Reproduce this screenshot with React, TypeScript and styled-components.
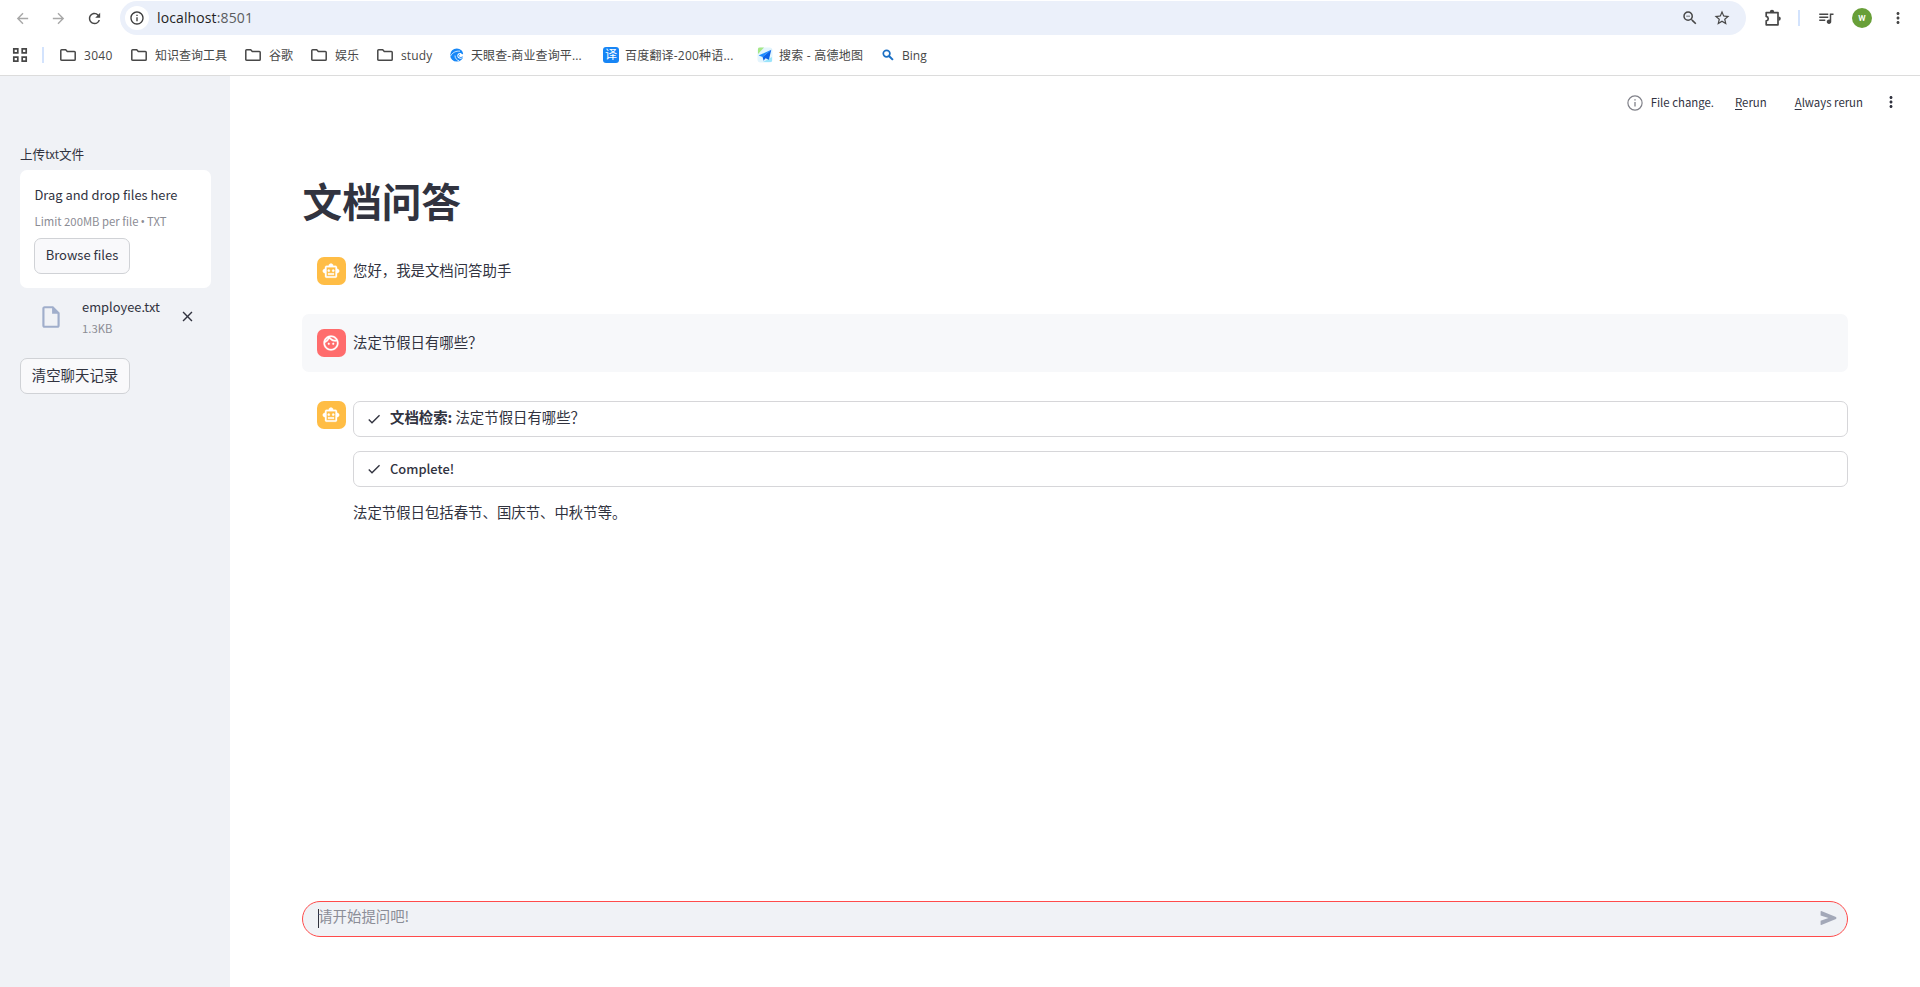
import React from 'react';
import styled, { createGlobalStyle } from 'styled-components';
import {
  MdArrowBack,
  MdArrowForward,
  MdRefresh,
  MdStarBorder,
  MdQueueMusic,
  MdMoreVert,
  MdOutlineSmartToy,
  MdOutlineFace,
  MdOutlineInsertDriveFile,
  MdClose,
  MdCheck,
  MdZoomOut,
  MdInfoOutline,
} from 'react-icons/md';

const Global = createGlobalStyle`
  * { box-sizing: border-box; }
  body { margin: 0; background: #fff; overflow: hidden; }
  button { font: inherit; color: inherit; }
  svg { display: block; flex: none; }
`;

const Page = styled.div`
  height: 987px;
  display: flex;
  flex-direction: column;
  background: #fff;
  color: #31333f;
  font-family: 'Noto Sans CJK SC', sans-serif;
`;

/* Browser chrome */
const Chrome = styled.header`
  height: 76px;
  flex: none;
  border-bottom: 1px solid #dcdcdc;
  font-family: 'Open Sans', 'Noto Sans CJK SC', sans-serif;
  color: #474747;
`;

const Toolbar = styled.div`
  display: flex;
  align-items: center;
  height: 35px;
  padding: 1px 11px 0 14px;
`;

const NavGroup = styled.div`
  display: flex;
  align-items: center;
  gap: 19px;
  width: 106px;
  flex: none;
`;

const AddressBar = styled.div`
  display: flex;
  align-items: center;
  width: 1626px;
  height: 34px;
  padding: 0 15px 0 5px;
  border-radius: 17px;
  background: #ebf0fa;
`;

const SiteInfo = styled.span`
  display: grid;
  place-items: center;
  width: 24px;
  height: 24px;
  border-radius: 50%;
  background: #fff;
  color: #3c3c3c;
`;

const Address = styled.span`
  flex: 1;
  padding-left: 8px;
  font-size: 14px;
  line-height: 20px;
  letter-spacing: 0.12px;
  color: #5a5c60;

  b { font-weight: 400; color: #1f1f1f; }
`;

const AddressActions = styled.div`
  display: flex;
  gap: 14px;
`;

const ToolbarActions = styled.div`
  display: flex;
  align-items: center;
  flex: 1;
  padding-left: 18px;
`;

const Separator = styled.span<{ $m: string }>`
  width: 2px;
  height: 16px;
  margin: ${(p) => p.$m};
  background: #d3e3fd;
`;

const Profile = styled.span`
  display: grid;
  place-items: center;
  width: 20px;
  height: 20px;
  margin: 0 17px 0 17px;
  border-radius: 50%;
  background: #689f38;
  color: #fff;
  font: 500 10px/18px Roboto, sans-serif;
`;

const Bookmarks = styled.nav`
  display: flex;
  align-items: center;
  height: 40px;
  padding-left: 12px;
`;

const Bookmark = styled.span<{ $w: number; $gap?: number; $ls?: number }>`
  display: flex;
  align-items: center;
  gap: ${(p) => p.$gap ?? 8}px;
  width: ${(p) => p.$w}px;
  font-size: 12px;
  line-height: 18px;
  letter-spacing: ${(p) => p.$ls ?? 0}px;
  white-space: nowrap;
`;

const BookmarkName = styled.span`
  padding-top: 2px;
`;

const TranslateBadge = styled.span`
  display: grid;
  place-items: center;
  width: 16px;
  height: 16px;
  border-radius: 3px;
  background: #1785f5;
  color: #fff;
  font-size: 12px;
  line-height: 14px;
`;

/* Application */
const AppBody = styled.div`
  display: flex;
  flex: 1;
  min-height: 0;
`;

const Sidebar = styled.aside`
  width: 230px;
  flex: none;
  padding: 68px 19px 0 20px;
  background: #f0f2f6;
`;

const Latin = styled.span<{ $size: number; $ls?: number }>`
  font-size: ${(p) => p.$size}px;
  letter-spacing: ${(p) => p.$ls ?? 0}px;
`;

const Label = styled.div`
  height: 26px;
  font-size: 12.6px;
  line-height: 20px;
`;

const DropZone = styled.section`
  height: 118px;
  padding: 14px;
  border-radius: 7px;
  background: #fff;
`;

const Bullet = styled.span`
  margin: 0 2px;
  font-family: 'Open Sans', sans-serif;
  font-size: 12px;
`;

const Line = styled.div<{ $h: number; $muted?: boolean }>`
  display: flex;
  align-items: center;
  height: ${(p) => p.$h}px;
  line-height: ${(p) => p.$h}px;
  padding-left: 0.5px;
  white-space: nowrap;
  color: ${(p) => (p.$muted ? '#8b8c94' : 'inherit')};
`;

const Button = styled.button<{ $w: number; $mt?: number }>`
  display: flex;
  align-items: center;
  justify-content: center;
  width: ${(p) => p.$w}px;
  height: 36px;
  margin-top: ${(p) => p.$mt ?? 0}px;
  padding: 0 0 3px;
  border: 1px solid #d0d2d6;
  border-radius: 7px;
  background: #f9f9fb;
  font-size: 14.4px;
  white-space: nowrap;
`;

const FileRow = styled.div`
  display: flex;
  align-items: center;
  height: 70px;
  padding: 0 15px 13px 18px;
`;

const FileMeta = styled.div`
  flex: 1;
  padding: 2px 0 0 17.5px;
`;

const Main = styled.main`
  display: flex;
  flex-direction: column;
  flex: 1;
  padding: 0 72px 50px;
`;

const StatusBar = styled.div`
  display: flex;
  align-items: center;
  justify-content: flex-end;
  height: 54px;
  margin-right: -52px;

  u { text-underline-offset: 2px; }
`;

const StatusItem = styled.span<{ $ml: number }>`
  margin-left: ${(p) => p.$ml}px;
  padding-bottom: 2px;
  font-size: 11.4px;
  line-height: 18px;
`;

const Title = styled.h1`
  height: 112.4px;
  margin: 0;
  padding: 45.5px 0 0 0.6px;
  font-size: 39.6px;
  line-height: 48px;
  font-weight: 700;
`;

const Messages = styled.div`
  display: flex;
  flex-direction: column;
  gap: 14.4px;
  flex: 1;
`;

const Message = styled.article<{ $user?: boolean }>`
  display: flex;
  gap: 7.2px;
  min-height: 57.6px;
  padding: 14.4px ${(p) => (p.$user ? '14.4px' : '0')} 14.4px 15px;
  border-radius: 7px;
  background: ${(p) => (p.$user ? '#f7f8fa' : 'transparent')};
`;

const Avatar = styled.span<{ $bg: string }>`
  display: grid;
  place-items: center;
  width: 28.8px;
  height: 28px;
  flex: none;
  border-radius: 7px;
  background: ${(p) => p.$bg};
  color: #fff;

  path:not([fill='none']) { stroke: #fff; stroke-width: 0.4px; }
`;

const MessageBody = styled.div`
  display: flex;
  flex-direction: column;
  gap: 14px;
  flex: 1;
`;

const Text = styled.p<{ $tight?: boolean }>`
  margin: ${(p) => (p.$tight ? '-1.5px' : '0')} 0 0;
  font-size: 14.4px;
  line-height: 26px;
`;

const Step = styled.div`
  display: flex;
  align-items: center;
  gap: 8px;
  height: 36px;
  padding: 0 12px;
  border: 1px solid #d6d6d9;
  border-radius: 7px;
  font-size: 14.4px;
  line-height: 20px;

  b { font-weight: 700; }
`;

const StepText = styled.span<{ $up?: number }>`
  padding-bottom: ${(p) => p.$up ?? 0}px;
`;

const Done = styled(Latin)`
  font-weight: 500;
`;

const ChatInput = styled.div`
  display: flex;
  align-items: center;
  height: 36px;
  padding: 0 10px 0 15px;
  border: 1px solid #ff4b4b;
  border-radius: 18px;
  background: #f0f2f6;

  svg { margin-bottom: 2px; }
`;

const Caret = styled.span`
  width: 1px;
  height: 19px;
  margin-top: -2px;
  background: #31333f;
`;

const Placeholder = styled.span`
  flex: 1;
  margin-left: -0.8px;
  padding-bottom: 6px;
  font-size: 14.4px;
  line-height: 20px;
  color: #8b8d97;
`;

const FolderIcon = () => (
  <svg width="16" height="16" viewBox="0 0 16 16" fill="none" stroke="#474747" strokeWidth="1.5">
    <path d="M.8 12.4V3.6q0-.9.9-.9h4l1.6 1.7h7q.9 0 .9.9v7.1q0 .9-.9.9H1.7q-.9 0-.9-.9Z" />
  </svg>
);

const AppsIcon = () => (
  <svg width="16" height="16" viewBox="0 0 16 16" fill="none" stroke="#474747" strokeWidth="1.7">
    <path d="M1.8 1.8h4v4h-4zM10.2 1.8h4v4h-4zM1.8 10.2h4v4h-4zM10.2 10.2h4v4h-4z" />
  </svg>
);

const PuzzleIcon = () => (
  <svg width="18" height="18" viewBox="0 0 18 18">
    <path
      d="M2.2 3.6H14v12.2H2.2v-3.9c2.7-.7 2.7-3.8 0-4.5Z"
      fill="none"
      stroke="#474747"
      strokeWidth="1.7"
      strokeLinejoin="round"
    />
    <path d="M5.8 3a2.2 2.2 0 0 1 4.4 0ZM14.6 7.4a2.2 2.2 0 0 1 0 4.4Z" fill="#474747" />
  </svg>
);

const SwirlIcon = () => (
  <svg width="16" height="16" viewBox="0 0 16 16">
    <circle cx="7.8" cy="8" r="6.6" fill="#1687f7" />
    <path d="M1.500 9C3.500 5.500 7 3.700 11 4.200" fill="none" stroke="#fff" strokeWidth=".8" />
    <path d="M15.500 6.500c-1.600 1.300-2.700.9-3.400-.2-1.500-1-4 .2-3.800 2.700.2 2.100 2.500 3.200 4.200 2.500l3-2Z" fill="#fff" />
    <path d="M10.800 7.200c-1.300.4-1.600 2.300-.3 3 .9.500 2.200.3 3.200-.4" fill="none" stroke="#1687f7" strokeWidth="1" />
    <path d="M6 8.500c0 2.800 1.600 4.500 4.200 5.400" fill="none" stroke="#fff" strokeWidth=".8" />
  </svg>
);

const MapIcon = () => (
  <svg width="16" height="16" viewBox="0 0 16 16">
    <rect x=".5" y=".5" width="15" height="15" rx="3" fill="#e4f5fd" />
    <path d="M1 1.500Q1 .5 3 .5h4L1 7Z" fill="#a5e887" />
    <path d="m6 15 9-5v3.500q0 1.500-1.500 1.500Z" fill="#9be4fb" />
    <path d="M14.300 2.700 1.600 8.600l4 1.500Z" fill="#1d8cff" />
    <path d="m14.300 2.700-8.700 7.400 1 3.700 1.900-2.500 3.400 1.500Z" fill="#0b62e8" />
  </svg>
);

const SearchIcon = () => (
  <svg width="14" height="14" viewBox="0 0 14 14" fill="none" stroke="#1a6fc4" strokeWidth="1.700">
    <circle cx="5.600" cy="5.600" r="3.300" />
    <path d="m8 8 3.900 3.900" strokeWidth="2" />
  </svg>
);

const NoticeIcon = () => (
  <svg width="16" height="16" viewBox="0 0 16 16" fill="none" stroke="#808189">
    <circle cx="8" cy="8" r="7.100" strokeWidth="1.200" />
    <path d="M8 7v4.600" strokeWidth="1.300" />
    <path d="M8 4.300v1.300" strokeWidth="1.400" />
  </svg>
);

const SendIcon = () => (
  <svg width="17" height="14" viewBox="0 0 17 14">
    <path d="M1.300 0 16 6Q17 7 16 8L1.300 14Q.6 14 .6 13.400V9.800L8.500 7 .6 4.600V.6Q.6 0 1.300 0Z" fill="#a3a8b8" />
  </svg>
);

const folders = [
  { name: '3040', width: 71, spacing: 0.3 },
  { name: '知识查询工具', width: 114 },
  { name: '谷歌', width: 66 },
  { name: '娱乐', width: 66 },
  { name: 'study', width: 72, spacing: 0.15 },
];

export default function App() {
  return (
    <Page>
      <Global />
      <Chrome>
        <Toolbar>
          <NavGroup>
            <MdArrowBack size={17} color="#a8a8a8" />
            <MdArrowForward size={17} color="#a8a8a8" />
            <MdRefresh size={17} />
          </NavGroup>
          <AddressBar>
            <SiteInfo>
              <MdInfoOutline size={16} />
            </SiteInfo>
            <Address>
              <b>localhost</b>:8501
            </Address>
            <AddressActions>
              <MdZoomOut size={18} />
              <MdStarBorder size={18} />
            </AddressActions>
          </AddressBar>
          <ToolbarActions>
            <PuzzleIcon />
            <Separator $m="0 17px 0 16px" />
            <MdQueueMusic size={18} />
            <Profile>w</Profile>
            <MdMoreVert size={18} />
          </ToolbarActions>
        </Toolbar>
        <Bookmarks>
          <AppsIcon />
          <Separator $m="0 16px 0 14px" />
          {folders.map((f) => (
            <Bookmark key={f.name} $w={f.width} $ls={f.spacing}>
              <FolderIcon />
              <BookmarkName>{f.name}</BookmarkName>
            </Bookmark>
          ))}
          <Bookmark $w={154} $gap={6} $ls={0.12}>
            <SwirlIcon />
            <BookmarkName>天眼查-商业查询平...</BookmarkName>
          </Bookmark>
          <Bookmark $w={154} $gap={6} $ls={0.2}>
            <TranslateBadge>译</TranslateBadge>
            <BookmarkName>百度翻译-200种语...</BookmarkName>
          </Bookmark>
          <Bookmark $w={124} $gap={6} $ls={0.25}>
            <MapIcon />
            <BookmarkName>搜索 - 高德地图</BookmarkName>
          </Bookmark>
          <Bookmark $w={60} $gap={7}>
            <SearchIcon />
            <BookmarkName>Bing</BookmarkName>
          </Bookmark>
        </Bookmarks>
      </Chrome>

      <AppBody>
        <Sidebar>
          <Label>
            上传<Latin $size={11.4}>txt</Latin>文件
          </Label>
          <DropZone>
            <Line $h={22}>
              <Latin $size={12.9}>Drag and drop files here</Latin>
            </Line>
            <Line $h={30} $muted>
              <Latin $size={11.3}>
                Limit 200MB per file<Bullet>•</Bullet>TXT
              </Latin>
            </Line>
            <Button $w={96} $mt={2}>
              <Latin $size={13}>Browse files</Latin>
            </Button>
          </DropZone>
          <FileRow>
            <MdOutlineInsertDriveFile size={26} color="#a0aecb" />
            <FileMeta>
              <Line $h={22}>
                <Latin $size={12.9}>employee.txt</Latin>
              </Line>
              <Line $h={21} $muted>
                <Latin $size={11.3}>1.3KB</Latin>
              </Line>
            </FileMeta>
            <MdClose size={17} />
          </FileRow>
          <Button $w={110}>清空聊天记录</Button>
        </Sidebar>

        <Main>
          <StatusBar>
            <NoticeIcon />
            <StatusItem $ml={8}>File change.</StatusItem>
            <StatusItem $ml={21}>
              <u>R</u>erun
            </StatusItem>
            <StatusItem $ml={28}>
              <u>A</u>lways rerun
            </StatusItem>
            <StatusItem $ml={19}>
              <MdMoreVert size={18} />
            </StatusItem>
          </StatusBar>
          <Title>文档问答</Title>
          <Messages>
            <Message>
              <Avatar $bg="#ffbd45">
                <MdOutlineSmartToy size={18} />
              </Avatar>
              <Text>您好，我是文档问答助手</Text>
            </Message>
            <Message $user>
              <Avatar $bg="#ff6c6c">
                <MdOutlineFace size={18} />
              </Avatar>
              <Text>法定节假日有哪些？</Text>
            </Message>
            <Message>
              <Avatar $bg="#ffbd45">
                <MdOutlineSmartToy size={18} />
              </Avatar>
              <MessageBody>
                <Step>
                  <MdCheck size={16} />
                  <StepText $up={4}>
                    <b>文档检索:</b> 法定节假日有哪些？
                  </StepText>
                </Step>
                <Step>
                  <MdCheck size={16} />
                  <StepText $up={1}>
                    <Done $size={12.9}>Complete!</Done>
                  </StepText>
                </Step>
                <Text $tight>法定节假日包括春节、国庆节、中秋节等。</Text>
              </MessageBody>
            </Message>
          </Messages>
          <ChatInput>
            <Caret />
            <Placeholder>请开始提问吧!</Placeholder>
            <SendIcon />
          </ChatInput>
        </Main>
      </AppBody>
    </Page>
  );
}
